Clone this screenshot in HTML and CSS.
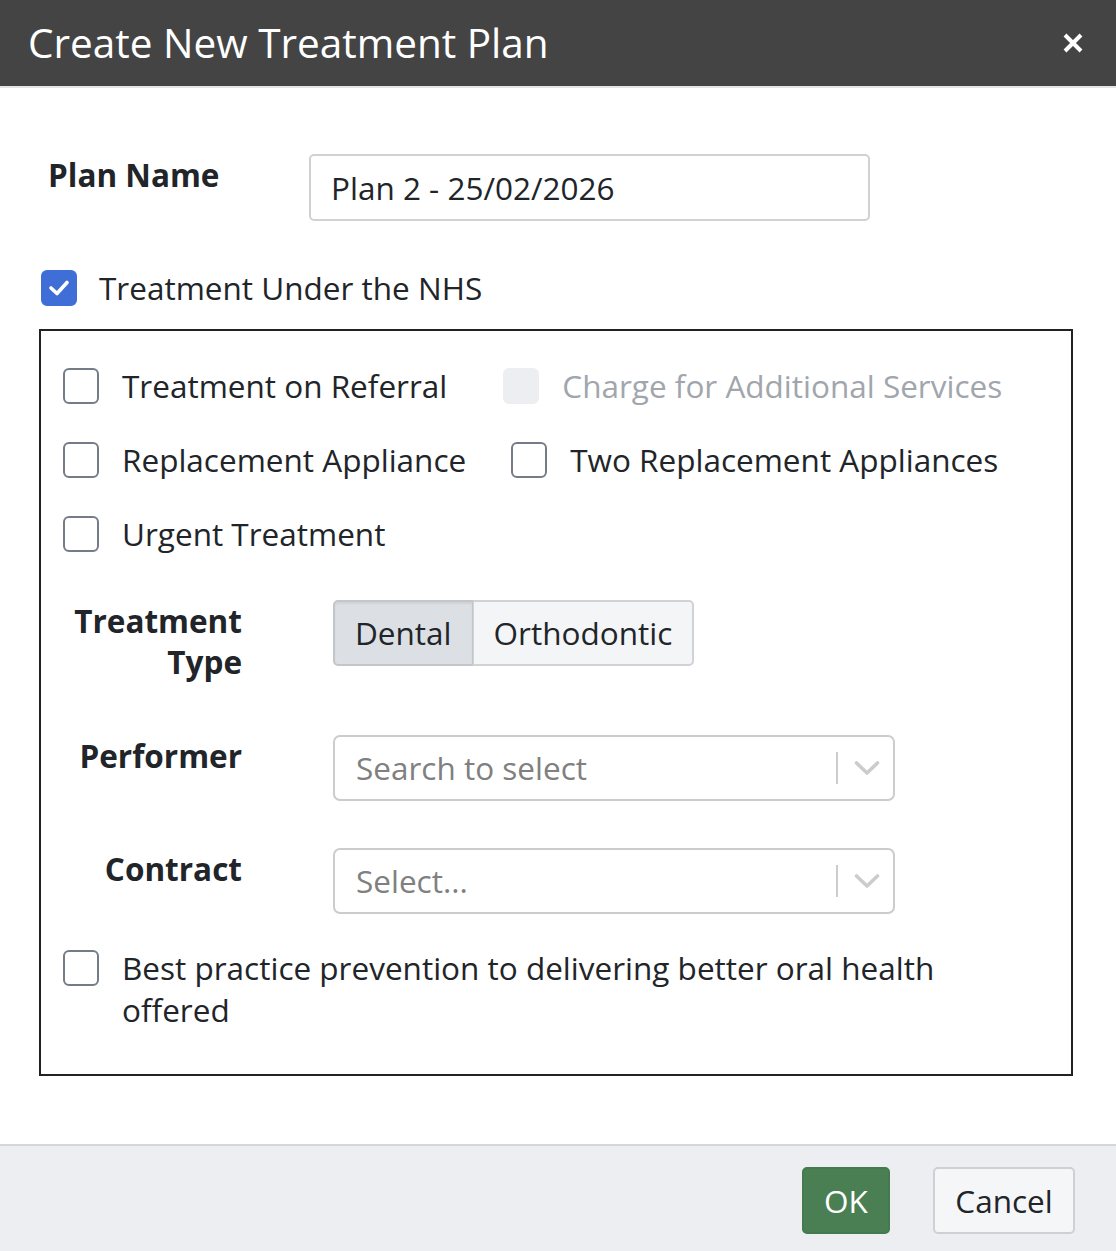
FILE: index.html
```html
<!DOCTYPE html>
<html lang="en">
<head>
<meta charset="utf-8">
<title>Create New Treatment Plan</title>
<link rel="stylesheet" href="styles.css">
</head>
<body>
<div class="dialog">
  <header class="dlg-header">
    <h1 class="dlg-title">Create New Treatment Plan</h1>
    <button class="dlg-close" aria-label="Close">
      <svg width="20" height="20" viewBox="0 0 20 20"><path d="M2 2 L18 18 M18 2 L2 18" stroke="#fff" stroke-width="4" stroke-linecap="butt" fill="none"/></svg>
    </button>
  </header>

  <main class="dlg-body">
    <div class="plan-row">
      <label class="plan-label">Plan Name</label>
      <div class="text-input">Plan 2 - 25/02/2026</div>
    </div>

    <label class="check nhs">
      <span class="box checked">
        <svg width="22" height="18" viewBox="0 0 22 18"><path d="M3 9 L9 14.5 L19 3.5" stroke="#fff" stroke-width="3.6" fill="none" stroke-linecap="round" stroke-linejoin="round"/></svg>
      </span>
      <span class="check-text">Treatment Under the NHS</span>
    </label>

    <section class="nhs-panel">
      <div class="check-row">
        <label class="check"><span class="box"></span><span class="check-text">Treatment on Referral</span></label>
        <label class="check disabled"><span class="box"></span><span class="check-text">Charge for Additional Services</span></label>
      </div>
      <div class="check-row">
        <label class="check"><span class="box"></span><span class="check-text">Replacement Appliance</span></label>
        <label class="check"><span class="box"></span><span class="check-text">Two Replacement Appliances</span></label>
      </div>
      <div class="check-row">
        <label class="check"><span class="box"></span><span class="check-text">Urgent Treatment</span></label>
      </div>

      <div class="form-grid">
        <div class="form-label tall">Treatment<br>Type</div>
        <div class="segmented">
          <span class="seg active">Dental</span><span class="seg">Orthodontic</span>
        </div>

        <div class="form-label">Performer</div>
        <div class="select">
          <span class="placeholder">Search to select</span>
          <span class="sel-sep"></span>
          <svg class="chev" width="26" height="16" viewBox="0 0 26 16"><path d="M2.5 3 L13 13 L23.5 3" stroke="#cccccc" stroke-width="3.6" fill="none" stroke-linecap="round" stroke-linejoin="round"/></svg>
        </div>

        <div class="form-label">Contract</div>
        <div class="select">
          <span class="placeholder">Select...</span>
          <span class="sel-sep"></span>
          <svg class="chev" width="26" height="16" viewBox="0 0 26 16"><path d="M2.5 3 L13 13 L23.5 3" stroke="#cccccc" stroke-width="3.6" fill="none" stroke-linecap="round" stroke-linejoin="round"/></svg>
        </div>
      </div>

      <label class="check multi">
        <span class="box"></span>
        <span class="check-text">Best practice prevention to delivering better oral health offered</span>
      </label>
    </section>
  </main>

  <footer class="dlg-footer">
    <button class="btn btn-ok">OK</button>
    <button class="btn btn-cancel">Cancel</button>
  </footer>
</div>
</body>
</html>
```

FILE: styles.css
```css
* { box-sizing: border-box; }

html, body {
  margin: 0;
  padding: 0;
  background: #ffffff;
}

body {
  font-family: "Open Sans", "Noto Sans", "Liberation Sans", sans-serif;
  color: #212529;
  font-size: 31.5px;
  line-height: 42px;
}

.dialog {
  width: 1116px;
  height: 1251px;
  display: flex;
  flex-direction: column;
}

.dlg-header {
  height: 88px;
  flex: none;
  background: #444444;
  border-bottom: 2px solid #e4e4e4;
  display: flex;
  align-items: center;
  justify-content: space-between;
  padding: 0 33px 0 28px;
}

.dlg-title {
  margin: 0;
  font-weight: 400;
  font-size: 40.5px;
  line-height: 50px;
  color: #ffffff;
}

.dlg-close {
  background: none;
  border: 0;
  padding: 0;
  width: 20px;
  height: 20px;
  display: flex;
  cursor: pointer;
}

.dlg-body {
  flex: 1;
  padding: 66px 43px 0 39px;
}

.plan-row {
  display: grid;
  grid-template-columns: 261px 561px;
  align-items: start;
  padding-left: 9px;
}

.plan-label {
  font-weight: 700;
}

.text-input {
  height: 67px;
  border: 2px solid #cfd1d4;
  border-radius: 5px;
  padding: 0 21px 0 20px;
  display: flex;
  align-items: center;
  color: #212529;
}

.check {
  display: flex;
  align-items: center;
  gap: 23px;
}

.box {
  width: 36px;
  height: 36px;
  flex: none;
  border: 2px solid #747c87;
  border-radius: 6px;
  background: #fff;
  display: flex;
  align-items: center;
  justify-content: center;
}

.box.checked {
  background: #3f6fd6;
  border-color: #3f6fd6;
}

.nhs {
  margin-top: 46px;
  padding-left: 2px;
  gap: 22px;
}

.nhs-panel {
  margin-top: 20px;
  border: 2px solid #222222;
  padding: 34px 22px 43px 22px;
}

.check-row {
  display: flex;
  gap: 45px;
  margin-bottom: 32px;
}

.check.disabled {
  margin-left: 11px;
}

.check.disabled .box {
  background: #eceef1;
  border-color: #eceef1;
}

.check.disabled .check-text {
  color: #a1a6ad;
}

.form-grid {
  display: grid;
  grid-template-columns: 179px 562px;
  column-gap: 91px;
  row-gap: 47px;
  margin-top: 45px;
}

.form-label {
  font-weight: 700;
  text-align: right;
  line-height: 41px;
  padding-top: 0;
}

.form-label.tall {
  padding-bottom: 6px;
}

.segmented {
  display: flex;
  align-self: start;
}

.seg {
  height: 66px;
  display: flex;
  align-items: center;
  padding: 0 20px;
  border: 2px solid #cfd2d6;
  background: #f4f5f7;
  color: #212529;
}

.seg:first-child {
  border-radius: 5px 0 0 5px;
  border-right-width: 1px;
}

.seg:last-child {
  border-radius: 0 5px 5px 0;
  border-left-width: 1px;
}

.seg.active {
  background: #dcdfe4;
  border-color: #c3c6cb;
  box-shadow: inset 0 2px 2px rgba(0, 0, 0, 0.06);
}

.select {
  height: 66px;
  border: 2px solid #cccccc;
  border-radius: 7px;
  display: flex;
  align-items: center;
  padding: 0 13px 0 21px;
  align-self: start;
}

.placeholder {
  flex: 1;
  color: #808080;
}

.sel-sep {
  width: 2px;
  height: 32px;
  background: #cccccc;
  margin-right: 16px;
}

.chev {
  flex: none;
}

.check.multi {
  align-items: flex-start;
  margin-top: 36px;
}

.check.multi .check-text {
  max-width: 830px;
  margin-top: -3px;
}

.dlg-footer {
  flex: none;
  height: 107px;
  border-top: 2px solid #d4d6d9;
  background: #eceef1;
  display: flex;
  justify-content: flex-end;
  align-items: flex-start;
  gap: 43px;
  padding: 21px 41px 0 0;
}

.btn {
  height: 67px;
  font-family: inherit;
  font-size: 31.5px;
  border-radius: 5px;
  cursor: pointer;
}

.btn-ok {
  width: 88px;
  background: #4a7f53;
  border: 2px solid #457a4e;
  color: #ffffff;
}

.btn-cancel {
  width: 142px;
  background: #f5f6f8;
  border: 2px solid #cdd0d4;
  color: #212529;
}
```
